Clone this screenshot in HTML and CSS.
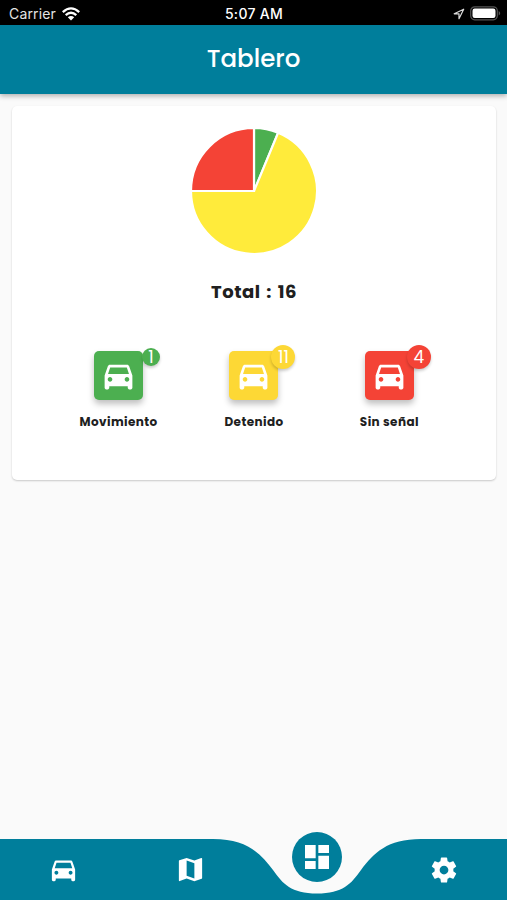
FILE: index.html
```html
<!DOCTYPE html>
<html lang="es">
<head>
<meta charset="utf-8">
<title>Tablero</title>
<link rel="stylesheet" href="styles.css">
</head>
<body>
<svg class="defs" aria-hidden="true">
  <symbol id="car" viewBox="0 -1 24 24"><path fill="currentColor" d="M18.920 5.010C18.720 4.420 18.160 4 17.500 4h-11c-.66 0-1.210.42-1.420 1.010L3 11v8c0 .55.45 1 1 1h1c.55 0 1-.45 1-1v-1h12v1c0 .55.45 1 1 1h1c.55 0 1-.45 1-1v-8l-2.080-5.990zM6.500 15c-.83 0-1.500-.67-1.500-1.500S5.670 12 6.500 12s1.500.67 1.500 1.500S7.330 15 6.500 15zm11 0c-.83 0-1.500-.67-1.500-1.500s.67-1.500 1.500-1.500 1.500.67 1.500 1.500-.67 1.500-1.500 1.500zM5.200 10l1.400-4.200h10.800L18.800 10H5.200z"/></symbol>
</svg>
<div class="screen">
  <div class="status">
    <div class="carrier"><span>Carrier</span>
      <svg width="18" height="14" viewBox="0 0 18 14" fill="none" stroke="#fff" stroke-width="2.300"><path d="M.8 5.200Q9-2.500 17.200 5.200"/><path d="M3.700 8.200Q9 3.200 14.300 8.200"/><path fill="#fff" stroke="none" d="M5.800 10.300Q9 7.600 12.200 10.300L9 13.500z"/></svg>
    </div>
    <div class="time">5:07 AM</div>
    <div class="power">
      <svg width="12" height="12" viewBox="0 0 12 12" fill="none" stroke="#ddd" stroke-width="1.200" stroke-linejoin="round"><path d="M10.700 1.200L1.200 5.800H6V10.700z"/></svg>
      <svg width="31" height="15" viewBox="0 0 31 15"><rect x=".7" y=".8" width="26.600" height="13" rx="4" fill="none" stroke="#555" stroke-width="1.200"/><rect x="2.500" y="2.600" width="23" height="9.400" rx="2.200" fill="#fff"/><path d="M28.700 5c2 1 2 3.600 0 4.600z" fill="#555"/></svg>
    </div>
  </div>
  <header class="header"><h1>Tablero</h1></header>
  <main class="content">
    <section class="card">
      <svg class="pie" width="126" height="126" viewBox="-63 -63 126 126" stroke="#fff" stroke-width="2.200">
        <path fill="#4caf50" d="M0 0V-63A63 63 0 0 1 24.110-58.200z"/>
        <path fill="#ffeb3b" d="M0 0L24.110-58.200A63 63 0 1 1-63 0z"/>
        <path fill="#f44336" d="M0 0H-63A63 63 0 0 1 0-63z"/>
      </svg>
      <div class="total">Total : 16</div>
      <div class="states">
        <div class="state"><div class="tile green"><svg width="37" height="37"><use href="#car"/></svg><span class="badge small">1</span></div><div class="label">Movimiento</div></div>
        <div class="state"><div class="tile yellow"><svg width="37" height="37"><use href="#car"/></svg><span class="badge">11</span></div><div class="label">Detenido</div></div>
        <div class="state"><div class="tile red"><svg width="37" height="37"><use href="#car"/></svg><span class="badge">4</span></div><div class="label">Sin señal</div></div>
      </div>
    </section>
  </main>
  <nav class="nav">
    <svg class="curve" width="507" height="61" viewBox="0 0 507 61"><path fill="#007e9b" d="M0 0H213C247 0 260 14 273 31C283 45 291 54.500 317 54.500C343 54.500 351 45 361 31C374 14 387 0 421 0H507V61H0z"/></svg>
    <a class="item"><svg width="31" height="31"><use href="#car"/></svg></a>
    <a class="item"><svg width="31" height="31" viewBox="0 0 24 24" fill="#fff"><path d="M20.500 3l-.16.03L15 5.100 9 3 3.360 4.900c-.21.07-.36.25-.36.48V20.500c0 .28.22.5.5.5l.16-.03L9 18.900l6 2.100 5.640-1.900c.21-.07.36-.25.36-.48V3.500c0-.28-.22-.5-.5-.5zM15 19l-6-2.110V5l6 2.110V19z"/></svg></a>
    <a class="item"><span class="active"><svg width="32" height="32" viewBox="0 0 24 24" fill="#fff"><path d="M3 13h8V3H3v10zm0 8h8v-6H3v6zm10 0h8V11h-8v10zm0-18v6h8V3h-8z"/></svg></span></a>
    <a class="item"><svg width="30" height="30" viewBox="0 0 24 24" fill="#fff"><path d="M19.430 12.980c.04-.32.07-.64.07-.98s-.03-.66-.07-.98l2.110-1.650c.19-.15.24-.42.12-.64l-2-3.460c-.12-.22-.39-.3-.61-.22l-2.490 1c-.52-.4-1.080-.73-1.690-.98l-.38-2.650C14.460 2.180 14.250 2 14 2h-4c-.25 0-.46.18-.49.42l-.38 2.650c-.61.25-1.170.59-1.690.98l-2.490-1c-.23-.09-.49 0-.61.22l-2 3.460c-.13.22-.07.49.12.64l2.110 1.650c-.04.32-.07.65-.07.98s.03.66.07.98l-2.110 1.650c-.19.15-.24.42-.12.64l2 3.460c.12.22.39.3.61.22l2.490-1c.52.4 1.080.73 1.690.98l.38 2.650c.03.24.24.42.49.42h4c.25 0 .46-.18.49-.42l.38-2.650c.61-.25 1.170-.59 1.690-.98l2.490 1c.23.09.49 0 .61-.22l2-3.460c.12-.22.07-.49-.12-.64l-2.110-1.650zM12 15.500c-1.930 0-3.500-1.570-3.500-3.500s1.570-3.500 3.500-3.500 3.500 1.570 3.500 3.500-1.570 3.500-3.500 3.500z"/></svg></a>
  </nav>
</div>
</body>
</html>
```
FILE: styles.css
```css
* { box-sizing: border-box; }
body { margin: 0; font-family: Poppins, Inter, sans-serif; }
.defs { position: absolute; width: 0; height: 0; }
.screen { width: 507px; height: 900px; display: flex; flex-direction: column; background: #fafafa; overflow: hidden; }
.status { height: 25px; flex: none; background: #000; color: #fff; display: grid; grid-template-columns: 1fr auto 1fr; align-items: center; padding: 2px 6px 0 9px; font: 14px Inter, sans-serif; z-index: 2; }
.carrier { display: flex; align-items: center; gap: 6px; color: #e4e4e4; letter-spacing: 0.15px; }
.time { font-weight: 500; font-size: 14px; letter-spacing: 0.3px; padding-right: 2px; }
.power { display: flex; align-items: center; justify-content: flex-end; gap: 5px; }
.header { height: 69px; flex: none; background: #007e9b; color: #fff; display: flex; align-items: center; justify-content: center; box-shadow: 0 2px 5px rgba(0, 0, 0, 0.3); z-index: 1; }
.header h1 { margin: 0 0 3px; font-size: 24.5px; font-weight: 500; letter-spacing: 0; }
.content { flex: 1; padding: 12px 11px 0 12px; }
.card { height: 374px; background: #fff; border-radius: 5px; box-shadow: 0 1px 2px rgba(0, 0, 0, 0.2); display: flex; flex-direction: column; align-items: center; padding-top: 22px; }
.pie { flex: none; }
.total { margin-top: 23px; height: 30px; line-height: 30px; font-size: 18px; font-weight: 700; letter-spacing: 0.5px; word-spacing: 1.5px; color: #202020; white-space: pre; }
.states { display: grid; grid-template-columns: repeat(3, 135.4px); margin-top: 44px; }
.state { display: flex; flex-direction: column; align-items: center; }
.tile { position: relative; width: 49px; height: 49px; border-radius: 5px; color: #fff; display: flex; align-items: center; justify-content: center; box-shadow: 0 4px 6px rgba(0, 0, 0, 0.25); }
.tile svg { display: block; }
.green, .green .badge { background: #4caf50; }
.yellow, .yellow .badge { background: #fdd835; }
.red, .red .badge { background: #f44336; }
.badge { position: absolute; right: -17px; top: -6px; width: 24px; height: 24px; border-radius: 50%; font-size: 17px; line-height: 24px; text-align: center; box-shadow: 0 2px 3px rgba(0, 0, 0, 0.2); }
.badge.small { width: 18px; height: 18px; top: -3px; right: -17px; line-height: 18px; }
.label { margin-top: 12px; height: 20px; line-height: 20px; font-size: 12px; font-weight: 700; letter-spacing: 0.4px; color: #202020; white-space: nowrap; }
.nav { position: relative; height: 61px; flex: none; display: grid; grid-template: 61px / repeat(4, 1fr); color: #fff; }
.curve { position: absolute; left: 0; top: 0; }
.item { position: relative; display: flex; align-items: center; justify-content: center; }
.item > svg { display: block; }
.active { display: flex; align-items: center; justify-content: center; width: 50px; height: 50px; margin-bottom: 26px; border-radius: 50%; background: #007e9b; }
```
